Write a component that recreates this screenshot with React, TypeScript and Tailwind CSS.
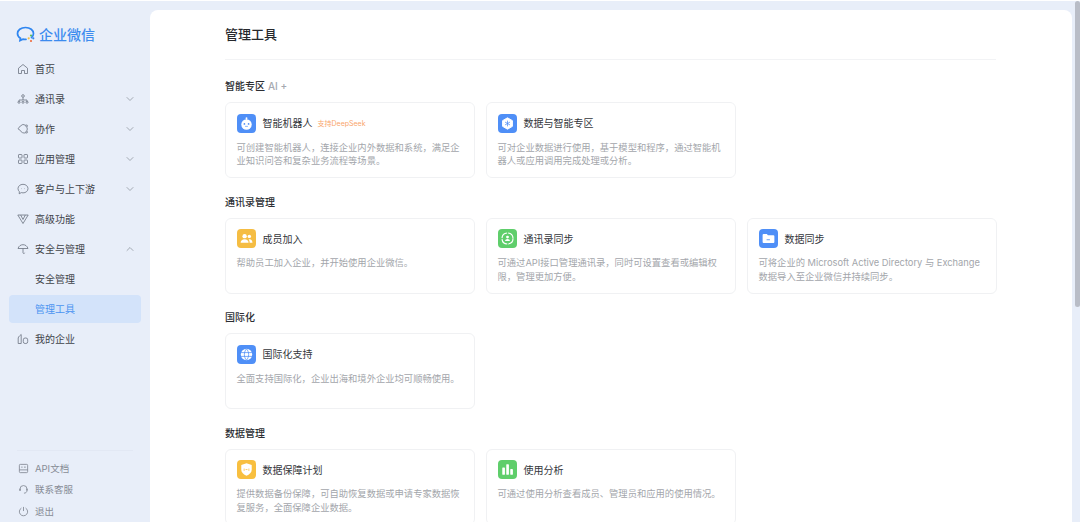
import type { ReactNode } from 'react';
import { ChevronDown, ChevronUp } from 'lucide-react';

const FONT = "font-['Inter','Noto_Sans_CJK_SC',sans-serif]";

function NavSvg({ children }: { children: ReactNode }) {
  return (
    <svg viewBox="0 0 12 12" fill="none" stroke="#6b7280" strokeWidth="0.8" className="w-[12px] h-[12px] shrink-0">
      {children}
    </svg>
  );
}

const navIcons: Record<string, ReactNode> = {
  home: <path d="M1.5 5.2 6 1.5l4.500 3.700v5.300H7.500V7.500h-3v3H1.500z" strokeLinejoin="round" />,
  contacts: (
    <>
      <circle cx="6" cy="3" r="1.300" />
      <path d="M2 8.500V7h8v1.500M6 4.500V7" />
      <rect x="1" y="8.500" width="2" height="1.600" rx="0.400" />
      <rect x="5" y="8.500" width="2" height="1.600" rx="0.400" />
      <rect x="9" y="8.500" width="2" height="1.600" rx="0.400" />
    </>
  ),
  collab: (
    <>
      <path d="M8.800 2.300A4.200 4.200 0 0 0 3.300 3L1 5.800l2.300 1.600a4.200 4.200 0 0 0 5.500 2.300" />
      <path d="M9.900 4.200a4.200 4.200 0 0 1 0 3.600" />
      <circle cx="9.600" cy="2.900" r="0.900" />
      <circle cx="9.600" cy="9.100" r="0.900" />
    </>
  ),
  apps: (
    <>
      <rect x="1.500" y="1.500" width="3.500" height="3.500" rx="0.600" />
      <rect x="7" y="1.500" width="3.500" height="3.500" rx="0.600" />
      <rect x="1.500" y="7" width="3.500" height="3.500" rx="0.600" />
      <rect x="7" y="7" width="3.500" height="3.500" rx="0.600" />
    </>
  ),
  chat: (
    <>
      <path d="M6 1.300c2.800 0 5 1.900 5 4.300s-2.200 4.300-5 4.300c-.6 0-1.200-.1-1.700-.3L2.200 10.800l.2-2.100C1.500 7.900 1 6.800 1 5.600c0-2.400 2.200-4.300 5-4.300z" />
      <path d="M4 5.600h.4M7.600 5.600H8" />
    </>
  ),
  advanced: <path d="M.8 2h10.400L6 10.500zM3.700 2 6 6.500 8.300 2" strokeLinejoin="round" />,
  security: <path d="M1 5.500C1.800 3 3.700 1.700 6 1.700s4.200 1.300 5 3.800zM6 5.500v4.300c0 .9 1.700.9 1.700 0" strokeLinejoin="round" />,
  company: (
    <>
      <path d="M1.200 10.500V5C1.200 3.700 4.200 1.500 4.200 1.500v9z" strokeLinejoin="round" />
      <rect x="6.300" y="5" width="4.400" height="5.500" rx="1.800" />
    </>
  ),
  doc: (
    <>
      <rect x="1.500" y="1.500" width="9" height="9" rx="1" />
      <path d="M1.500 7.500h9M3.500 4.500h1.500M6.500 4.500h2" />
    </>
  ),
  support: (
    <>
      <path d="M2.200 6.500V5.500a3.800 3.800 0 0 1 7.600 0v1.500c0 1.800-1.300 3-3.300 3" />
      <path d="M2.200 5.200v2.500M9.800 5.200v2" strokeWidth="1.300" />
    </>
  ),
  logout: (
    <>
      <path d="M3.700 2.300a4.500 4.500 0 1 0 4.600 0" />
      <path d="M6 1v4.500" />
    </>
  ),
};

type NavItem = { label: string; icon?: string; arrow?: 'down' | 'up'; active?: boolean };

const navItems: NavItem[] = [
  { label: '首页', icon: 'home' },
  { label: '通讯录', icon: 'contacts', arrow: 'down' },
  { label: '协作', icon: 'collab', arrow: 'down' },
  { label: '应用管理', icon: 'apps', arrow: 'down' },
  { label: '客户与上下游', icon: 'chat', arrow: 'down' },
  { label: '高级功能', icon: 'advanced' },
  { label: '安全与管理', icon: 'security', arrow: 'up' },
  { label: '安全管理' },
  { label: '管理工具', active: true },
  { label: '我的企业', icon: 'company' },
];

function CardIcon({ color, children }: { color: string; children: ReactNode }) {
  return (
    <div className={`w-[19px] h-[19px] rounded-[4px] flex items-center justify-center shrink-0 ${color}`}>
      <svg viewBox="0 0 20 20" className="w-[19px] h-[19px]">
        {children}
      </svg>
    </div>
  );
}

const cardIcons: Record<string, ReactNode> = {
  robot: (
    <CardIcon color="bg-[#4f8ff7]">
      <circle cx="10" cy="11" r="5.500" fill="#fff" />
      <circle cx="10" cy="4.500" r="1" fill="#fff" />
      <path d="M10 5v1.500" stroke="#fff" strokeWidth="0.800" />
      <circle cx="7.800" cy="10.500" r="0.900" fill="#4f8ff7" />
      <circle cx="12.200" cy="10.500" r="0.900" fill="#4f8ff7" />
      <path d="M8.500 13h3" stroke="#4f8ff7" strokeWidth="0.700" />
    </CardIcon>
  ),
  data: (
    <CardIcon color="bg-[#4f8ff7]">
      <path d="M10 4 15.200 7v6L10 16l-5.200-3V7z" fill="#fff" stroke="#fff" strokeLinejoin="round" />
      <path d="M10 7v6M7.400 8.500l5.200 3M12.600 8.500l-5.200 3" stroke="#4f8ff7" strokeWidth="0.800" />
    </CardIcon>
  ),
  members: (
    <CardIcon color="bg-[#f5bd43]">
      <circle cx="8" cy="7.500" r="2.300" fill="#fff" />
      <path d="M3.800 14.500c0-2.400 1.800-3.800 4.200-3.800s4.200 1.400 4.200 3.800z" fill="#fff" />
      <circle cx="13" cy="7.800" r="1.800" fill="#fff" />
      <path d="M13.300 10.700c1.800.2 3 1.500 3 3.800h-3c0-1.500-.2-2.700-1-3.500z" fill="#fff" />
    </CardIcon>
  ),
  sync: (
    <CardIcon color="bg-[#5fce6b]">
      <circle cx="10" cy="10" r="5.800" fill="none" stroke="#fff" strokeWidth="1.200" strokeDasharray="8 1.100" />
      <circle cx="10" cy="8.500" r="1.500" fill="#fff" />
      <path d="M7.400 12.600c.2-1.500 1.200-2.200 2.600-2.200s2.400.7 2.600 2.200z" fill="#fff" />
    </CardIcon>
  ),
  folder: (
    <CardIcon color="bg-[#4f8ff7]">
      <path d="M3.800 6.300c0-.6.400-1 1-1h3.400l1.200 1.400h5.800c.6 0 1 .4 1 1v6c0 .6-.4 1-1 1H4.800c-.6 0-1-.4-1-1z" fill="#fff" />
      <path d="M8 11.300h3.500" stroke="#4f8ff7" strokeWidth="0.900" />
    </CardIcon>
  ),
  globe: (
    <CardIcon color="bg-[#4f8ff7]">
      <circle cx="10" cy="10" r="6" fill="#fff" />
      <path d="M4 8h12M4 12h12M10 4c-3 3.500-3 8.500 0 12M10 4c3 3.500 3 8.500 0 12" fill="none" stroke="#4f8ff7" strokeWidth="0.800" />
    </CardIcon>
  ),
  shield: (
    <CardIcon color="bg-[#f8bf3f]">
      <path d="M10 3.500 15.500 5.300v5c0 3-2.500 5-5.500 6.200-3-1.200-5.500-3.200-5.500-6.200v-5z" fill="#fff" />
      <path d="M7.500 9v2.500M12.500 9v2.500M9 10h2" stroke="#f8bf3f" strokeWidth="0.800" />
    </CardIcon>
  ),
  chart: (
    <CardIcon color="bg-[#5fce6b]">
      <rect x="4.500" y="8" width="2.800" height="7.500" rx="0.500" fill="#fff" />
      <rect x="8.700" y="4.500" width="2.800" height="11" rx="0.500" fill="#fff" />
      <rect x="12.900" y="9.500" width="2.800" height="6" rx="0.500" fill="#fff" />
    </CardIcon>
  ),
};

type Card = { icon: string; title: string; tag?: string; desc: string };
type Section = { title: string; ai?: boolean; cards: Card[] };

const sections: Section[] = [
  {
    title: '智能专区',
    ai: true,
    cards: [
      {
        icon: 'robot',
        title: '智能机器人',
        tag: '支持DeepSeek',
        desc: '可创建智能机器人，连接企业内外数据和系统，满足企业知识问答和复杂业务流程等场景。',
      },
      {
        icon: 'data',
        title: '数据与智能专区',
        desc: '可对企业数据进行使用，基于模型和程序，通过智能机器人或应用调用完成处理或分析。',
      },
    ],
  },
  {
    title: '通讯录管理',
    cards: [
      { icon: 'members', title: '成员加入', desc: '帮助员工加入企业，并开始使用企业微信。' },
      {
        icon: 'sync',
        title: '通讯录同步',
        desc: '可通过API接口管理通讯录，同时可设置查看或编辑权限，管理更加方便。',
      },
      {
        icon: 'folder',
        title: '数据同步',
        desc: '可将企业的 Microsoft Active Directory 与 Exchange 数据导入至企业微信并持续同步。',
      },
    ],
  },
  {
    title: '国际化',
    cards: [{ icon: 'globe', title: '国际化支持', desc: '全面支持国际化，企业出海和境外企业均可顺畅使用。' }],
  },
  {
    title: '数据管理',
    cards: [
      {
        icon: 'shield',
        title: '数据保障计划',
        desc: '提供数据备份保障，可自助恢复数据或申请专家数据恢复服务，全面保障企业数据。',
      },
      { icon: 'chart', title: '使用分析', desc: '可通过使用分析查看成员、管理员和应用的使用情况。' },
    ],
  },
];

function Sidebar() {
  return (
    <aside className="w-[150px] shrink-0 flex flex-col justify-between">
      <div>
        <div className="h-[39px] mt-[14px] mb-[1px] pl-[16px] flex items-center gap-[3px]">
          <svg viewBox="0 0 20 18" className="w-[20px] h-[18px] shrink-0">
            <path
              d="M15.500 11.500C16.800 10.500 17.500 9 17.500 7.500 17.500 4.200 14.200 1.500 9.500 1.500S1.500 4.200 1.500 7.500c0 2 1.200 3.700 3 4.800l-.5 2.200 3-1.300c1 .2 2 .3 3 .2"
              fill="none"
              stroke="#2f86f0"
              strokeWidth="1.700"
              strokeLinecap="round"
            />
            <circle cx="15" cy="9.500" r="1.100" fill="#5cc05c" />
            <circle cx="12.700" cy="12.300" r="1.100" fill="#f5bd43" />
            <circle cx="17.300" cy="12.300" r="1.100" fill="#2f86f0" />
            <circle cx="15" cy="15" r="1.100" fill="#ee6b3d" />
          </svg>
          <span className="text-[14px] leading-none font-medium text-[#3c8bef]">企业微信</span>
        </div>
        <nav className="flex flex-col px-[9px] gap-[2px]">
          {navItems.map((item) => (
            <div
              key={item.label}
              className={`h-[28px] rounded-[4px] flex items-center pl-[8px] pr-[5px] ${item.active ? 'bg-[#d3e3fa]' : ''}`}
            >
              <div className="w-[18px] shrink-0">
                {item.icon && <NavSvg>{navIcons[item.icon]}</NavSvg>}
              </div>
              <span
                className={`flex-1 text-[10px] leading-none ${item.active ? 'text-[#4b94f1]' : 'text-[#3f434a]'}`}
              >
                {item.label}
              </span>
              {item.arrow === 'down' && <ChevronDown className="w-[12px] h-[12px] text-[#8b919b]" strokeWidth={1.500} />}
              {item.arrow === 'up' && <ChevronUp className="w-[12px] h-[12px] text-[#8b919b]" strokeWidth={1.500} />}
            </div>
          ))}
        </nav>
      </div>
      <div className="mx-[17px] pl-[1px] pt-[7px] border-t border-[#e2e8f4] flex flex-col">
        {[
          { label: 'API文档', icon: 'doc' },
          { label: '联系客服', icon: 'support' },
          { label: '退出', icon: 'logout' },
        ].map((item) => (
          <div key={item.label} className="h-[21.500px] flex items-center">
            <div className="w-[17px] shrink-0">
              <svg viewBox="0 0 12 12" fill="none" stroke="#7f8590" strokeWidth="0.900" className="w-[11px] h-[11px]">
                {navIcons[item.icon]}
              </svg>
            </div>
            <span className="text-[9.500px] leading-none text-[#878c96]">{item.label}</span>
          </div>
        ))}
      </div>
    </aside>
  );
}

function ToolCard({ card }: { card: Card }) {
  return (
    <div className="h-[76px] rounded-[6px] border border-[#f0f1f3] bg-white pt-[10px] pl-[10.500px] pr-[10px]">
      <div className="flex items-center h-[20px]">
        {cardIcons[card.icon]}
        <span className="ml-[7px] text-[10px] leading-none text-[#33363b]">{card.title}</span>
        {card.tag && <span className="ml-[5px] text-[7px] leading-none text-[#f9a66c]">{card.tag}</span>}
      </div>
      <p className="mt-[7.500px] text-[9.300px] leading-[13.500px] text-[#a3a6ab]">{card.desc}</p>
    </div>
  );
}

export default function App() {
  return (
    <div className={`${FONT} antialiased w-[1080px] h-[522px] overflow-hidden flex bg-[#e8eef9] border-t border-white`}>
      <Sidebar />
      <main className="flex-1 mt-[9px] rounded-tl-[8px] rounded-tr-[8px] bg-white overflow-hidden pl-[75px] pr-[76px]">
        <h1 className="h-[50px] flex items-center text-[13px] leading-none font-medium text-[#26282c] border-b border-[#f2f3f5]">
          管理工具
        </h1>
        <div className="pt-[18px] flex flex-col gap-[15.500px]">
          {sections.map((section) => (
            <section key={section.title}>
              <h2 className="h-[16px] mb-[8px] flex items-center gap-[3px] text-[10px] leading-none font-medium text-[#2c2e33]">
                {section.title}
                {section.ai && <span className="font-medium text-[#a5a9b0]">AI +</span>}
              </h2>
              <div className="grid grid-cols-[250px_250px_250px] gap-x-[11px]">
                {section.cards.map((card) => (
                  <ToolCard key={card.title} card={card} />
                ))}
              </div>
            </section>
          ))}
        </div>
      </main>
      <div className="w-[8px] shrink-0 flex justify-end">
        <div className="w-[5px] h-[306px] bg-[#b9bdc7] rounded-[3px]" />
      </div>
    </div>
  );
}
